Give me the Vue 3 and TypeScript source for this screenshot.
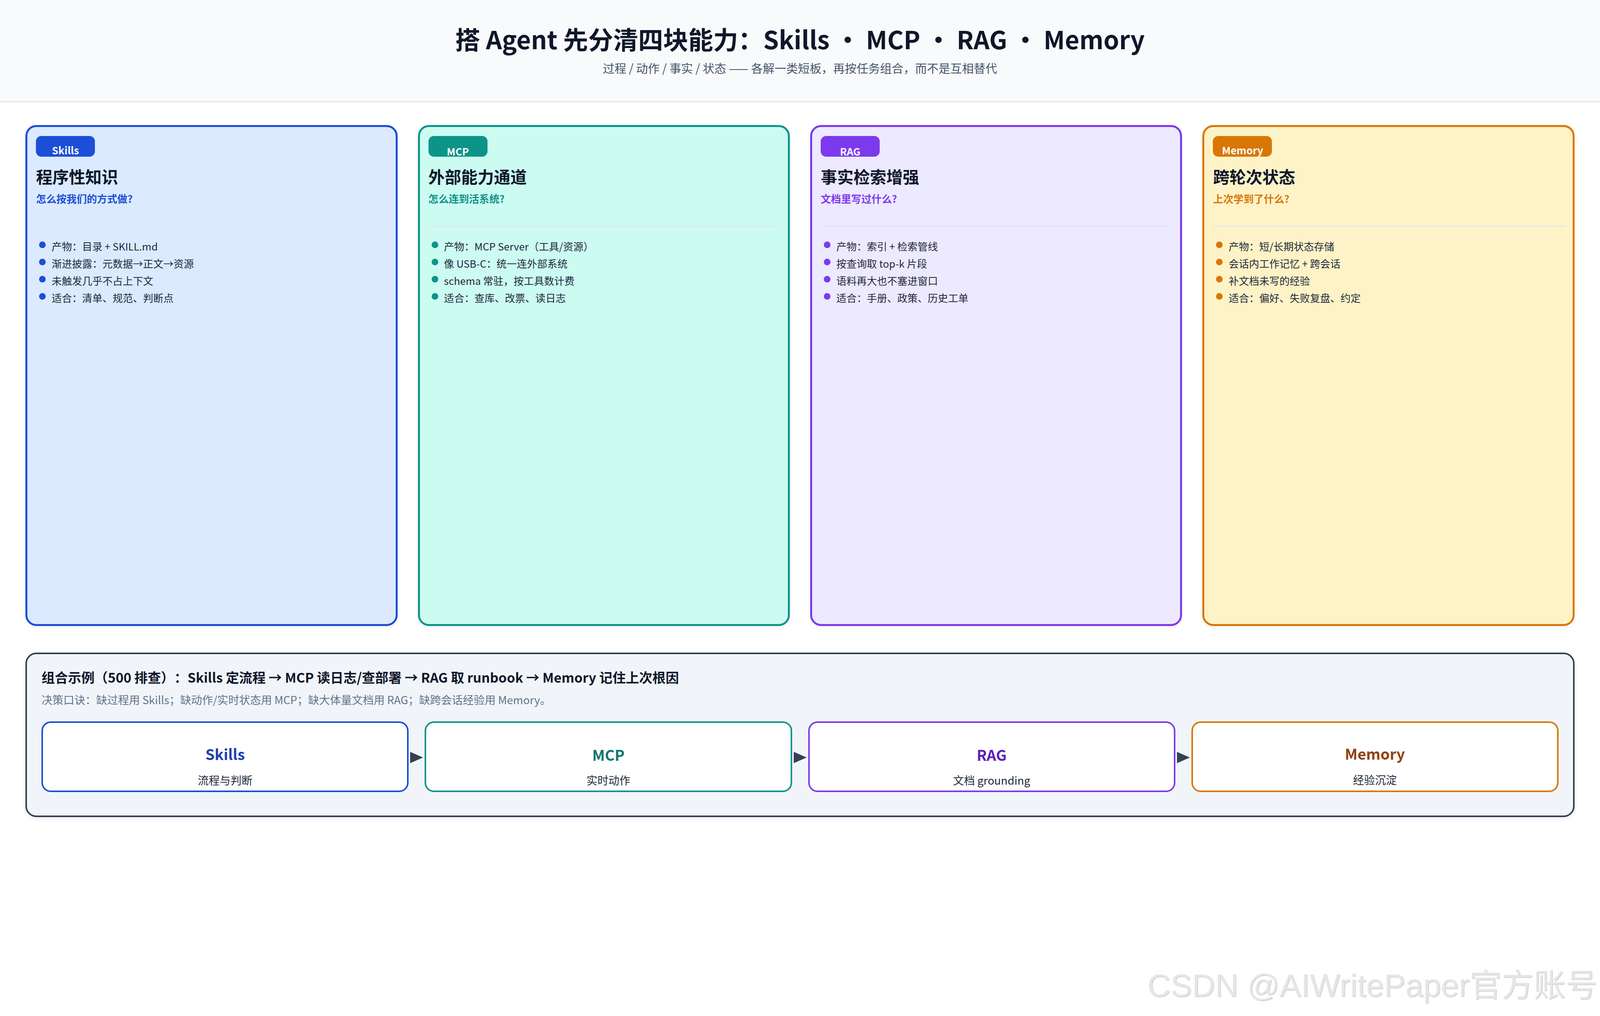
<script setup lang="ts">
interface Capability {
  key: string
  tag: string
  title: string
  question: string
  points: string[]
  flowLabel: string
  flowNote: string
}

const capabilities: Capability[] = [
  {
    key: 'skills',
    tag: 'Skills',
    title: '程序性知识',
    question: '怎么按我们的方式做?',
    points: ['产物：目录 + SKILL.md', '渐进披露：元数据→正文→资源', '未触发几乎不占上下文', '适合：清单、规范、判断点'],
    flowLabel: 'Skills',
    flowNote: '流程与判断'
  },
  {
    key: 'mcp',
    tag: 'MCP',
    title: '外部能力通道',
    question: '怎么连到活系统?',
    points: ['产物：MCP Server（工具/资源）', '像 USB-C：统一连外部系统', 'schema 常驻，按工具数计费', '适合：查库、改票、读日志'],
    flowLabel: 'MCP',
    flowNote: '实时动作'
  },
  {
    key: 'rag',
    tag: 'RAG',
    title: '事实检索增强',
    question: '文档里写过什么?',
    points: ['产物：索引 + 检索管线', '按查询取 top-k 片段', '语料再大也不塞进窗口', '适合：手册、政策、历史工单'],
    flowLabel: 'RAG',
    flowNote: '文档 grounding'
  },
  {
    key: 'memory',
    tag: 'Memory',
    title: '跨轮次状态',
    question: '上次学到了什么?',
    points: ['产物：短/长期状态存储', '会话内工作记忆 + 跨会话', '补文档未写的经验', '适合：偏好、失败复盘、约定'],
    flowLabel: 'Memory',
    flowNote: '经验沉淀'
  }
]
</script>

<template>
  <div class="page">
    <header class="top">
      <h1>搭 Agent 先分清四块能力：Skills ・ MCP ・ RAG ・ Memory</h1>
      <p>过程 / 动作 / 事实 / 状态 —— 各解一类短板，再按任务组合，而不是互相替代</p>
    </header>

    <main class="body">
      <section class="cards">
        <article v-for="c in capabilities" :key="c.key" class="card" :class="c.key">
          <span class="tag"><span class="tag-text">{{ c.tag }}</span></span>
          <h2>{{ c.title }}</h2>
          <div class="question">{{ c.question }}</div>
          <div class="divider"></div>
          <ul>
            <li v-for="p in c.points" :key="p">{{ p }}</li>
          </ul>
        </article>
      </section>

      <section class="combo">
        <h3>组合示例（500 排查）：Skills 定流程 → MCP 读日志/查部署 → RAG 取 runbook → Memory 记住上次根因</h3>
        <p>决策口诀：缺过程用 Skills；缺动作/实时状态用 MCP；缺大体量文档用 RAG；缺跨会话经验用 Memory。</p>
        <div class="flow">
          <template v-for="(c, i) in capabilities" :key="c.key">
            <div class="step" :class="c.key">
              <div class="step-name">{{ c.flowLabel }}</div>
              <div class="step-note">{{ c.flowNote }}</div>
            </div>
            <svg v-if="i < capabilities.length - 1" class="arrow" viewBox="0 0 33 29">
              <polygon points="0,0 33,14.5 0,29" />
            </svg>
          </template>
        </div>
      </section>
    </main>

    <div class="watermark">CSDN @AIWritePaper官方账号</div>
  </div>
</template>

<style>
html,
body {
  margin: 0;
  background: #fff;
}
</style>

<style scoped>
.page {
  position: relative;
  width: 100%;
  height: 2600px;
  overflow: hidden;
  background: #fff;
  color: #0f172a;
  font-family: "Noto Sans CJK SC", "Noto Sans", sans-serif;
}

.top {
  box-sizing: border-box;
  height: 262px;
  padding-top: 53px;
  background: #f8fafc;
  border-bottom: 3px solid #e2e8f0;
  text-align: center;
}

.top h1 {
  margin: 0;
  font-size: 64px;
  line-height: 90px;
  font-weight: 700;
  color: #0f172a;
}

.top p {
  margin: 8px 0 0;
  font-size: 30px;
  line-height: 44px;
  color: #475569;
}

.body {
  padding: 58px 1.59vw 0;
}

.cards {
  display: grid;
  grid-template-columns: repeat(4, 1fr);
  gap: 1.27vw;
  height: 1282px;
}

.card {
  box-sizing: border-box;
  padding: 23px 22px;
  border: 5px solid;
  border-radius: 28px;
  box-shadow: 0 4px 12px rgba(15, 23, 42, 0.05);
}

.card.skills { --accent: #1d4ed8; background: #dbeafe; border-color: #1d4ed8; }
.card.mcp { --accent: #0d9488; background: #ccfbf1; border-color: #0d9488; }
.card.rag { --accent: #7c3aed; background: #ede9fe; border-color: #7c3aed; }
.card.memory { --accent: #d97706; background: #fef3c7; border-color: #d97706; }

.tag {
  display: block;
  width: 151px;
  height: 53px;
  border-radius: 14px;
  background: var(--accent);
  color: #fff;
  font-size: 26px;
  font-weight: 600;
  line-height: 38px;
  text-align: center;
}

.tag-text {
  display: block;
  padding-top: 20px;
}

.card.skills .tag-text,
.card.memory .tag-text {
  padding-top: 17px;
}

.card h2 {
  margin: 20px 0 0;
  font-size: 42px;
  line-height: 60px;
  font-weight: 700;
  color: #0f172a;
}

.question {
  margin-top: 8px;
  font-size: 26px;
  line-height: 38px;
  font-weight: 700;
  color: var(--accent);
}

.divider {
  height: 3px;
  margin-top: 50px;
  background: #e2e8f0;
}

.card ul {
  margin: 28px 0 0;
  padding: 0;
  list-style: none;
}

.card li {
  position: relative;
  padding-left: 40px;
  font-size: 26px;
  line-height: 44px;
  color: #1e293b;
}

.card li::before {
  content: "";
  position: absolute;
  left: 8px;
  top: 10px;
  width: 17px;
  height: 17px;
  border-radius: 50%;
  background: var(--accent);
}

.combo {
  box-sizing: border-box;
  height: 421px;
  margin-top: 68px;
  padding: 34px 37px;
  background: #f1f5f9;
  border: 4px solid #334155;
  border-radius: 28px;
  box-shadow: 0 4px 12px rgba(15, 23, 42, 0.08);
}

.combo h3 {
  margin: 0;
  font-size: 34px;
  line-height: 50px;
  font-weight: 700;
  color: #0f172a;
  text-spacing-trim: space-all;
}

.combo p {
  margin: 12px 0 0;
  font-size: 28px;
  line-height: 40px;
  color: #64748b;
}

.flow {
  display: flex;
  align-items: center;
  margin-top: 36px;
}

.step {
  box-sizing: border-box;
  flex: 1;
  height: 181px;
  padding-top: 54px;
  background: #fff;
  border: 4px solid;
  border-radius: 24px;
  text-align: center;
}

.step.skills { border-color: #1d4ed8; --ink: #1e40af; --nudge: 0px; }
.step.mcp { border-color: #0d9488; --ink: #0f766e; --nudge: 2px; }
.step.rag { border-color: #7c3aed; --ink: #5b21b6; --nudge: 2px; }
.step.memory { border-color: #d97706; --ink: #92400e; --nudge: -1px; }

.step-name {
  margin-top: var(--nudge);
  margin-bottom: calc(0px - var(--nudge));
  font-size: 38px;
  line-height: 50px;
  font-weight: 700;
  color: var(--ink);
}

.step-note {
  margin-top: 22px;
  font-size: 28px;
  line-height: 40px;
  color: #1e293b;
}

.arrow {
  flex: none;
  width: 33px;
  height: 29px;
  margin: 4px 4px 0;
  fill: #334155;
}

.watermark {
  position: absolute;
  right: 6px;
  top: 2467px;
  font-family: "Liberation Sans", "Noto Sans CJK SC", sans-serif;
  font-size: 82px;
  line-height: 110px;
  color: #e6e6e6;
  text-shadow: 1px 1px 1px #b8b8b8;
  white-space: nowrap;
}
</style>
